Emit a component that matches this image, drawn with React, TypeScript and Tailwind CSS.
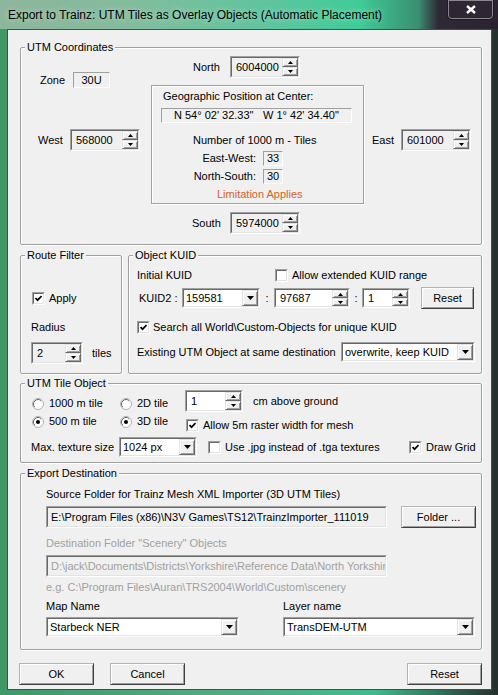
import React from 'react';

const font = "font-['Liberation_Sans',Arial,sans-serif]";
const sunken = 'border border-t-[#a0a0a0] border-l-[#a0a0a0] border-b-white border-r-white';
const sunkenInner = 'border border-t-[#696969] border-l-[#696969] border-b-[#e3e3e3] border-r-[#e3e3e3]';
const raised =
  'border border-t-[#e3e3e3] border-l-[#e3e3e3] border-b-[#696969] border-r-[#696969] shadow-[inset_1px_1px_0_#fff,inset_-1px_-1px_0_#a0a0a0]';
const pushBtn =
  'border border-t-[#b4b4b4] border-l-[#b4b4b4] border-b-[#404040] border-r-[#404040] shadow-[inset_1px_1px_0_#fff,inset_-1px_-1px_0_#a0a0a0]';

function Group({ title, className, children }: { title: string; className: string; children?: React.ReactNode }) {
  return (
    <fieldset className={`rounded-[2px] border border-[#a0a0a0] shadow-[inset_1px_1px_0_#fff,1px_1px_0_#fff] ${className}`}>
      <legend className="ml-[4px] bg-[#f0f0f0] px-[2px] leading-[12px]">{title}</legend>
      {children}
    </fieldset>
  );
}

function SpinBtn({ up }: { up?: boolean }) {
  return (
    <div className={`flex flex-1 items-center justify-center bg-[#f0f0f0] ${raised}`}>
      <svg width="5" height="3" viewBox="0 0 5 3">
        <path d={up ? 'M2.5 0 L5 3 L0 3 Z' : 'M0 0 L5 0 L2.5 3 Z'} fill="#000" />
      </svg>
    </div>
  );
}

function Spin({ value, className, white }: { value: string; className: string; white?: boolean }) {
  return (
    <div className={`flex ${sunken} ${className}`}>
      <div className={`flex min-w-0 flex-1 ${sunkenInner} ${white ? 'bg-white' : 'bg-[#f0f0f0]'}`}>
        <div className="flex flex-1 items-center pl-[4px]">{value}</div>
        <div className="flex w-[16px] flex-col">
          <SpinBtn up />
          <SpinBtn />
        </div>
      </div>
    </div>
  );
}

function Combo({ value, className }: { value: string; className: string }) {
  return (
    <div className={`flex h-[20px] ${sunken} ${className}`}>
      <div className={`flex min-w-0 flex-1 bg-white ${sunkenInner}`}>
        <div className="flex flex-1 items-center overflow-hidden whitespace-nowrap pl-[2px]">{value}</div>
        <div className={`flex w-[16px] items-center justify-center bg-[#f0f0f0] ${raised}`}>
          <svg width="7" height="4" viewBox="0 0 7 4">
            <path d="M0 0 L7 0 L3.5 4 Z" fill="#000" />
          </svg>
        </div>
      </div>
    </div>
  );
}

function Check({ checked }: { checked?: boolean }) {
  return (
    <div className={`h-[13px] w-[13px] shrink-0 ${sunken}`}>
      <div className={`flex h-full w-full items-center justify-center bg-white ${sunkenInner}`}>
        {checked && (
          <svg width="7" height="7" viewBox="0 0 7 7">
            <path d="M0.5 3 L2.6 5.2 L6.6 1" stroke="#000" strokeWidth="1.7" fill="none" />
          </svg>
        )}
      </div>
    </div>
  );
}

function Radio({ checked }: { checked?: boolean }) {
  return (
    <svg width="12" height="12" viewBox="0 0 12 12" className="shrink-0">
      <circle cx="6" cy="6" r="5.5" fill="#fff" stroke="#b0b0b0" />
      <path d="M2.82 9.18 A4.5 4.5 0 0 1 9.18 2.82" stroke="#6a6a6a" fill="none" />
      {checked && <circle cx="6" cy="6" r="2" fill="#000" />}
    </svg>
  );
}

function Button({ label, className }: { label: string; className: string }) {
  return (
    <div className={`flex h-[22px] items-center justify-center bg-[#f0f0f0] ${pushBtn} ${className}`}>{label}</div>
  );
}

function Field({ value, disabled }: { value: string; disabled?: boolean }) {
  return (
    <div className={`h-[22px] w-[341px] ${sunken}`}>
      <div
        className={`flex h-full items-center overflow-hidden whitespace-nowrap bg-[#f0f0f0] pl-[3px] ${sunkenInner} ${
          disabled ? 'text-[#a0a0a0]' : ''
        }`}
      >
        {value}
      </div>
    </div>
  );
}

function TitleBar() {
  return (
    <div className="flex h-[29px] items-start bg-[linear-gradient(90deg,#8db69c_0%,#84bc9d_25%,#5cc59f_55%,#3fcc98_72%,#3a8f72_84%,#2e2a35_88%,#2b2230_100%)]">
      <div className="pl-[8px] pt-[7px] text-[12px] leading-[16px] [text-shadow:0_0_6px_rgba(255,255,255,0.6)]">
        Export to Trainz: UTM Tiles as Overlay Objects (Automatic Placement)
      </div>
      <div className="ml-auto mr-[4px] flex h-[20px] w-[47px] items-center justify-center rounded-b-[5px] border border-t-0 border-[#1c1c1c] bg-[#2f2634] shadow-[inset_0_0_0_1px_#8a8590]">
        <svg width="10" height="9" viewBox="0 0 10 9">
          <path d="M1 1 L9 8 M9 1 L1 8" stroke="#fff" strokeWidth="2.4" />
        </svg>
      </div>
    </div>
  );
}

export default function App() {
  return (
    <div
      className={`flex h-[695px] w-[498px] flex-col overflow-hidden bg-[linear-gradient(90deg,#3f9766_0%,#55a87e_40%,#3dbc90_75%,#2e5a4a_92%,#25302c_100%)] text-[11px] leading-[13px] text-black ${font}`}
    >
      <TitleBar />
      <div className="ml-[7px] mr-[6px] flex h-[661px] flex-col border border-[#35574a] bg-[#f0f0f0]">
        {/* UTM Coordinates */}
        <Group title="UTM Coordinates" className="ml-[12px] mt-[11px] h-[204px] w-[462px]">
          <div className="flex">
            <div className="flex w-[130px] flex-col">
              <div className="ml-[19px] mt-[19px] flex h-[16px] items-center">
                <span className="w-[33px]">Zone</span>
                <div className={`flex h-[16px] w-[37px] items-center justify-center ${sunken}`}>30U</div>
              </div>
              <div className="ml-[17px] mt-[41px] flex items-center">
                <span className="w-[32px]">West</span>
                <Spin value="568000" className="h-[22px] w-[70px]" />
              </div>
            </div>
            <div className="flex w-[213px] flex-col">
              <div className="ml-[42px] mt-[3px] flex items-center">
                <span className="w-[37px]">North</span>
                <Spin value="6004000" className="h-[22px] w-[70px]" />
              </div>
              <div className="mt-[7px] flex h-[119px] flex-col border border-[#a0a0a0] shadow-[1px_1px_0_#fff,inset_1px_1px_0_#fff]">
                <div className="ml-[11px] mt-[4px]">Geographic Position at Center:</div>
                <div className={`ml-[9px] mt-[5px] flex h-[15px] w-[191px] items-center ${sunken}`}>
                  <span className="w-[101px] pl-[12px]">N 54° 02' 32.33"</span>
                  <span>W 1° 42' 34.40"</span>
                </div>
                <div className="ml-[41px] mt-[11px]">Number of 1000 m - Tiles</div>
                <div className="mt-[4px] flex items-center">
                  <span className="w-[111px] pr-[7px] text-right">East-West:</span>
                  <div className={`flex h-[15px] w-[20px] items-center justify-center ${sunken}`}>33</div>
                </div>
                <div className="mt-[3px] flex items-center">
                  <span className="w-[111px] pr-[7px] text-right">North-South:</span>
                  <div className={`flex h-[15px] w-[20px] items-center justify-center ${sunken}`}>30</div>
                </div>
                <div className="ml-[65px] mt-[4px] text-[#d4602c]">Limitation Applies</div>
              </div>
              <div className="ml-[41px] mt-[8px] flex items-center">
                <span className="w-[38px]">South</span>
                <Spin value="5974000" className="h-[22px] w-[70px]" />
              </div>
            </div>
            <div className="ml-[8px] mt-[76px] flex h-[22px] items-center">
              <span className="w-[29px]">East</span>
              <Spin value="601000" className="h-[22px] w-[70px]" />
            </div>
          </div>
        </Group>

        {/* Route filter + Object KUID */}
        <div className="ml-[12px] mt-[4px] flex gap-[6px]">
          <Group title="Route Filter" className="h-[125px] w-[102px]">
            <div className="ml-[11px] mt-[31px] flex h-[13px] items-center gap-[4px]">
              <Check checked />
              <span>Apply</span>
            </div>
            <div className="ml-[10px] mt-[16px]">Radius</div>
            <div className="ml-[10px] mt-[8px] flex items-center">
              <Spin value="2" className="h-[22px] w-[52px]" />
              <span className="ml-[9px]">tiles</span>
            </div>
          </Group>
          <Group title="Object KUID" className="h-[125px] w-[354px]">
            <div className="ml-[8px] mt-[8px] flex h-[13px] items-center">
              <span className="w-[138px]">Initial KUID</span>
              <Check />
              <span className="ml-[4px]">Allow extended KUID range</span>
            </div>
            <div className="ml-[10px] mt-[5px] flex h-[22px] items-center">
              <span className="w-[43px]">KUID2 :</span>
              <Combo value="159581" className="w-[78px]" />
              <span className="w-[14px] text-center">:</span>
              <Spin value="97687" white className="h-[20px] w-[76px]" />
              <span className="w-[12px] text-center">:</span>
              <Spin value="1" white className="h-[20px] w-[48px]" />
              <Button label="Reset" className="ml-[11px] w-[53px]" />
            </div>
            <div className="ml-[8px] mt-[12px] flex h-[13px] items-center gap-[3px]">
              <Check checked />
              <span>Search all World\Custom-Objects for unique KUID</span>
            </div>
            <div className="ml-[8px] mt-[8px] flex h-[20px] items-center">
              <span className="w-[204px]">Existing UTM Object at same destination</span>
              <Combo value="overwrite, keep KUID" className="w-[134px]" />
            </div>
          </Group>
        </div>

        {/* UTM Tile Object */}
        <Group title="UTM Tile Object" className="ml-[12px] mt-[3px] h-[86px] w-[462px]">
          <div className="flex">
            <div className="w-[164px] pl-[11px] pt-[8px]">
              <div className="grid grid-cols-[88px_auto] gap-y-[5px]">
                <div className="flex h-[13px] items-center gap-[5px]">
                  <Radio />
                  <span>1000 m tile</span>
                </div>
                <div className="flex h-[13px] items-center gap-[5px]">
                  <Radio />
                  <span>2D tile</span>
                </div>
                <div className="flex h-[13px] items-center gap-[5px]">
                  <Radio checked />
                  <span>500 m tile</span>
                </div>
                <div className="flex h-[13px] items-center gap-[5px]">
                  <Radio checked />
                  <span>3D tile</span>
                </div>
              </div>
            </div>
            <div className="flex flex-col pt-[1px]">
              <div className="flex items-center">
                <Spin value="1" white className="h-[22px] w-[58px]" />
                <span className="ml-[10px]">cm above ground</span>
              </div>
              <div className="ml-[1px] mt-[7px] flex h-[13px] items-center gap-[4px]">
                <Check checked />
                <span>Allow 5m raster width for mesh</span>
              </div>
            </div>
          </div>
          <div className="ml-[10px] mt-[5px] flex h-[20px] items-center">
            <span className="w-[88px]">Max. texture size</span>
            <Combo value="1024 px" className="w-[78px]" />
            <div className="ml-[11px] flex w-[201px] items-center gap-[4px]">
              <Check />
              <span>Use .jpg instead of .tga textures</span>
            </div>
            <div className="flex items-center gap-[4px]">
              <Check checked />
              <span>Draw Grid</span>
            </div>
          </div>
        </Group>

        {/* Export Destination */}
        <Group title="Export Destination" className="ml-[12px] mt-[4px] h-[183px] w-[462px]">
          <div className="flex flex-col pl-[25px]">
            <div className="mt-[9px]">Source Folder for Trainz Mesh XML Importer (3D UTM Tiles)</div>
            <div className="mt-[5px] flex items-center">
              <Field value="E:\Program Files (x86)\N3V Games\TS12\TrainzImporter_111019" />
              <Button label="Folder ..." className="ml-[14px] w-[75px]" />
            </div>
            <div className="mt-[9px] text-[#a0a0a0]">Destination Folder "Scenery" Objects</div>
            <div className="mt-[5px]">
              <Field disabled value="D:\jack\Documents\Districts\Yorkshire\Reference Data\North Yorkshir" />
            </div>
            <div className="mt-[4px] text-[#a0a0a0]">e.g. C:\Program Files\Auran\TRS2004\World\Custom\scenery</div>
            <div className="mt-[6px] flex">
              <span className="w-[237px]">Map Name</span>
              <span>Layer name</span>
            </div>
            <div className="mt-[4px] flex">
              <Combo value="Starbeck NER" className="w-[193px]" />
              <Combo value="TransDEM-UTM" className="ml-[44px] w-[192px]" />
            </div>
          </div>
        </Group>

        <div className="mt-[13px] flex h-[22px]">
          <Button label="OK" className="ml-[11px] w-[75px]" />
          <Button label="Cancel" className="ml-[16px] w-[75px]" />
          <Button label="Reset" className="ml-auto mr-[9px] w-[75px]" />
        </div>
      </div>
    </div>
  );
}
